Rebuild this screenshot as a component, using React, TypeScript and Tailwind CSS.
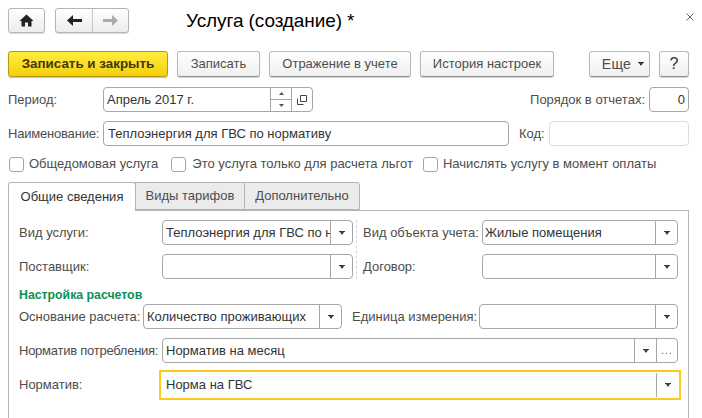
import React from "react";

const Caret = () => (
  <svg width="6" height="4" viewBox="0 0 6 4" className="block"><path d="M0 0H6V1H5L3.5 3.5H2.5L1 1H0Z" fill="#3a3a3a" /></svg>
);

function DropField({ w, text, sep = 22, more = false, pl = 3 }: { w: number; text?: string; sep?: number; more?: boolean; pl?: number }) {
  return (
    <div className="flex h-[25px] shrink-0 rounded-[4px] border border-[#a6a6a6] bg-white" style={{ width: w }}>
      <div className="min-w-0 flex-1 overflow-hidden whitespace-nowrap leading-[23px] text-[#333]" style={{ paddingLeft: pl }}>{text}</div>
      <div className="flex items-center justify-center border-l border-[#a6a6a6]" style={{ width: sep }}>
        <Caret />
      </div>
      {more && (
        <div className="flex w-[21px] items-end justify-center border-l border-[#a6a6a6] pb-[7px]">
          <span className="text-[10px] leading-[8px] tracking-[1px] text-[#555]">...</span>
        </div>
      )}
    </div>
  );
}

function Label({ children, w, ml = 0, tight = 0 }: { children: React.ReactNode; w: number; ml?: number; tight?: number }) {
  return <div className="shrink-0 whitespace-nowrap text-[#4d4d4d]" style={{ width: w, marginLeft: ml, letterSpacing: tight }}>{children}</div>;
}

function Btn({ w, children, ml = 9 }: { w: number; children: React.ReactNode; ml?: number }) {
  return (
    <div className="flex h-[26px] shrink-0 items-center justify-center rounded-[3px] border border-[#b8b8b8] border-b-[#8f8f8f] bg-gradient-to-b from-white to-[#f0f0f0] text-[#4d4d4d] shadow-[0_1px_1px_rgba(0,0,0,0.18)]" style={{ width: w, marginLeft: ml }}>
      {children}
    </div>
  );
}

function Check({ ml = 0, gap = 5, children }: { ml?: number; gap?: number; children: React.ReactNode }) {
  return (
    <div className="flex items-center text-[#4d4d4d]" style={{ marginLeft: ml }}>
      <div className="mt-[1px] h-[15px] w-[15px] rounded-[3px] border border-[#a6a6a6] bg-white" />
      <span className="whitespace-nowrap" style={{ marginLeft: gap }}>{children}</span>
    </div>
  );
}

export default function App() {
  return (
    <div className="h-[418px] w-[702px] overflow-hidden bg-white pl-2 pt-2 text-[13px] font-['Liberation_Sans',Arial,sans-serif]">
      <div className="flex h-[25px] w-[686px] items-center">
        <div className="flex h-[25px] w-[37px] items-center justify-center rounded-[3px] border border-[#b4b4b4] bg-gradient-to-b from-white to-[#ececec] shadow-[0_1px_1px_rgba(0,0,0,0.15)]">
          <svg width="15" height="13" viewBox="0 0 15 13"><path d="M7.5 0.5L14.5 7H12.5V12.5H9V8.5H6V12.5H2.5V7H0.5Z" fill="#222" /></svg>
        </div>
        <div className="ml-[10px] flex h-[25px] w-[74px] rounded-[3px] border border-[#b4b4b4] bg-gradient-to-b from-white to-[#ececec] shadow-[0_1px_1px_rgba(0,0,0,0.15)]">
          <div className="flex w-[37px] items-center justify-center border-r border-[#c4c4c4]">
            <svg width="15" height="11" viewBox="0 0 15 11"><path d="M6 0V4H15V7H6V11L0 5.5Z" fill="#222" /></svg>
          </div>
          <div className="flex flex-1 items-center justify-center">
            <svg width="15" height="11" viewBox="0 0 15 11"><path d="M9 0V4H0V7H9V11L15 5.5Z" fill="#aaa" /></svg>
          </div>
        </div>
        <div className="ml-[57px] whitespace-nowrap text-[19px] leading-[25px] tracking-[-0.1px] text-black">Услуга (создание) *</div>
        <svg className="ml-auto -mt-2" width="8" height="8" viewBox="0 0 8 8"><path d="M0.5 0.5L7.5 7.5M7.5 0.5L0.5 7.5" stroke="#666" strokeWidth="1" /></svg>
      </div>

      <div className="mt-[18px] flex h-[26px]">
        <div className="flex h-[26px] w-[160px] items-center justify-center rounded-[3px] border border-[#b39a16] bg-gradient-to-b from-[#ffee3c] to-[#f4cf00] text-[13.4px] font-bold text-[#43390c] shadow-[0_1px_1px_rgba(0,0,0,0.25)]">Записать и закрыть</div>
        <Btn w={83}>Записать</Btn>
        <Btn w={142}>Отражение в учете</Btn>
        <Btn w={134}>История настроек</Btn>
        <Btn w={61} ml={35}><span className="ml-[7px] text-[14px] tracking-[0.3px]">Еще</span><span className="ml-[7px]"><Caret /></span></Btn>
        <Btn w={30}><span className="text-[16px] text-[#333]">?</span></Btn>
      </div>

      <div className="mt-[10px] flex h-[25px] items-center">
        <Label w={95}>Период:</Label>
        <div className="flex h-[25px] w-[210px] rounded-[4px] border border-[#a6a6a6]">
          <div className="flex-1 pl-[3px] leading-[23px] text-[#333]">Апрель 2017 г.</div>
          <div className="flex w-[21px] flex-col border-l border-[#a6a6a6]">
            <div className="flex flex-1 items-center justify-center border-b border-[#a6a6a6]"><svg width="5" height="3" viewBox="0 0 5 3"><path d="M2.5 0L5 3H0Z" fill="#555" /></svg></div>
            <div className="flex flex-1 items-center justify-center"><svg width="5" height="3" viewBox="0 0 5 3"><path d="M0 0H5L2.5 3Z" fill="#555" /></svg></div>
          </div>
          <div className="flex w-[21px] items-center justify-center border-l border-[#a6a6a6]">
            <svg width="10" height="10" viewBox="0 0 10 10" fill="none" stroke="#444"><path d="M3.5 0.5H9.5V6.5H3.5Z" /><path d="M0.5 3.5V9.5H6.5" /></svg>
          </div>
        </div>
        <div className="ml-auto whitespace-nowrap text-[#4d4d4d]">Порядок в отчетах:</div>
        <div className="ml-[4px] mr-[13px] h-[25px] w-[40px] rounded-[4px] border border-[#a6a6a6] pr-[3px] text-right leading-[23px] text-[#333]">0</div>
      </div>

      <div className="mt-[9px] flex h-[25px] items-center">
        <Label w={95} tight={-0.2}>Наименование:</Label>
        <div className="h-[25px] w-[406px] rounded-[4px] border border-[#a6a6a6] pl-[4px] leading-[23px] text-[#333]">Теплоэнергия для ГВС по нормативу</div>
        <Label w={30} ml={10}>Код:</Label>
        <div className="h-[25px] w-[140px] rounded-[4px] border border-[#dcdcdc]" />
      </div>

      <div className="mt-[10px] flex h-[16px] items-center pl-px">
        <Check>Общедомовая услуга</Check>
        <Check ml={13} gap={6}>Это услуга только для расчета льгот</Check>
        <Check ml={10}>Начислять услугу в момент оплаты</Check>
      </div>

      <div className="relative z-10 mt-[10px] flex h-[28px]">
        <div className="flex h-[29px] w-[128px] items-center justify-center rounded-t-[3px] border border-b-0 border-[#b4b4b4] bg-white text-[#333]">Общие сведения</div>
        <div className="-ml-px flex h-[28px] w-[110px] items-center justify-center border border-[#b4b4b4] bg-[#ebebeb] text-[#4d4d4d]">Виды тарифов</div>
        <div className="-ml-px flex h-[28px] w-[116px] items-center justify-center rounded-tr-[3px] border border-[#b4b4b4] bg-[#ebebeb] text-[#4d4d4d]">Дополнительно</div>
      </div>

      <div className="h-[220px] w-[681px] border border-b-0 border-[#b4b4b4] pl-[10px] pt-[9px]">
        <div className="flex h-[25px] items-center">
          <Label w={143}>Вид услуги:</Label>
          <DropField w={191} text="Теплоэнергия для ГВС по нормативу" />
          <div className="ml-[3px] h-[59px] self-start border-l border-dashed border-[#d4d4d4]" />
          <Label w={119} ml={6}>Вид объекта учета:</Label>
          <DropField w={196} text="Жилые помещения" pl={2} />
        </div>
        <div className="mt-[9px] flex h-[25px] items-center">
          <Label w={143}>Поставщик:</Label>
          <DropField w={191} />
          <Label w={119} ml={10}>Договор:</Label>
          <DropField w={196} />
        </div>
        <div className="mt-[9px] h-[14px] text-[12.3px] font-bold leading-[14px] text-[#0a8f58]">Настройка расчетов</div>
        <div className="mt-[2px] flex h-[25px] items-center">
          <Label w={124}>Основание расчета:</Label>
          <DropField w={199} text="Количество проживающих" />
          <Label w={127} ml={10}>Единица измерения:</Label>
          <DropField w={199} />
        </div>
        <div className="mt-[9px] flex h-[25px] items-center">
          <Label w={143} tight={-0.25}>Норматив потребления:</Label>
          <DropField w={516} text="Норматив на месяц" pl={3} more />
        </div>
        <div className="mt-[7px] flex h-[30px] items-center">
          <Label w={140}>Норматив:</Label>
          <div className="flex h-[30px] w-[522px] border-2 border-[#fdc91c] bg-white">
            <div className="flex-1 pl-[5px] leading-[26px] text-[#333]">Норма на ГВС</div>
            <div className="my-[1px] flex w-[22px] items-center justify-center border-l border-[#a6a6a6]"><Caret /></div>
            <div className="w-[1px]" />
          </div>
        </div>
      </div>
    </div>
  );
}
